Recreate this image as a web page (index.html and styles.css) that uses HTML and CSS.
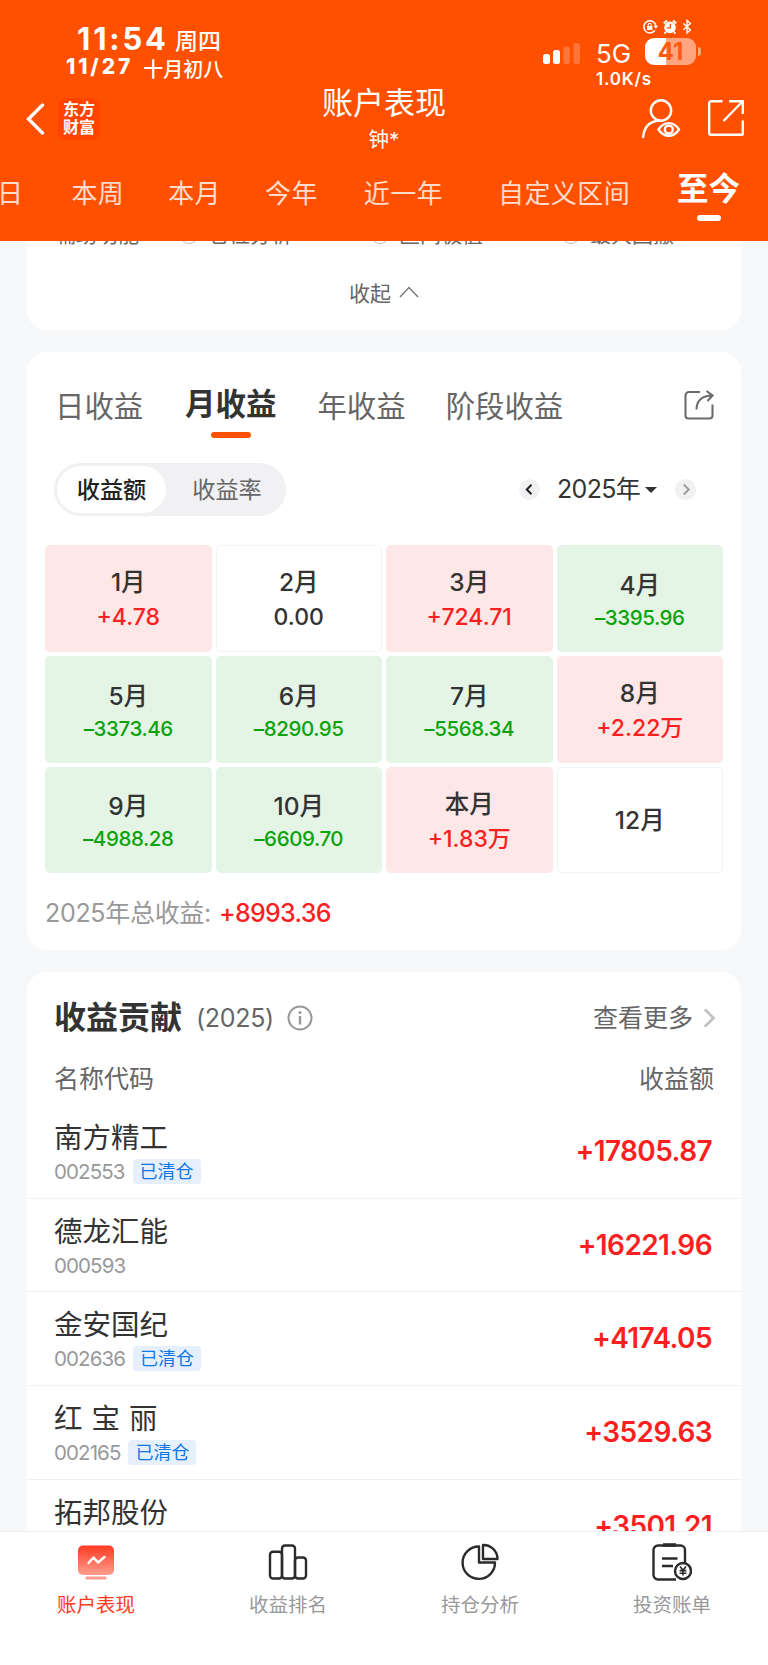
FILE: index.html
```
<!DOCTYPE html>
<html lang="zh-CN">
<head>
    <meta charset="UTF-8">
    <meta name="viewport" content="width=device-width, initial-scale=1.0">
    <title>账户表现</title>
    <link rel="stylesheet" href="styles.css">
</head>
<body>
    <header class="header">
        <div class="status">
            <div class="status-left">
                <div class="clock"><span class="time">11:54</span><span class="weekday">周四</span></div>
                <div class="date"><span class="day">11/27</span><span class="lunar">十月初八</span></div>
            </div>
            <div class="status-right">
                <div class="mini-icons">
                    <svg width="16" height="16" viewBox="0 0 16 16" fill="none" stroke="#fff" stroke-width="1.6">
                        <path d="M12.8 11.6A6.1 6.1 0 1 1 14 7.2"/>
                        <path d="M11.6 6.8h4.4l-2.2 3z" fill="#fff" stroke="none"/>
                        <rect x="5" y="7" width="5.4" height="4" fill="#fff" stroke="none"/>
                        <path d="M6.2 7V5.8a1.5 1.5 0 0 1 3 0V7" stroke-width="1.1"/>
                    </svg>
                    <svg width="14" height="16" viewBox="0 0 14 16">
                        <circle cx="7" cy="8.4" r="5.8" fill="#fff"/>
                        <path d="M.8 4.2L4 1.4M13.2 4.2L10 1.4M3 13l-1.4 1.6M11 13l1.4 1.6" stroke="#fff" stroke-width="2"/>
                        <path d="M7.4 4.8v4H4" fill="none" stroke="#ff5000" stroke-width="1.3"/>
                    </svg>
                    <svg width="10" height="16" viewBox="0 0 10 16" fill="none" stroke="#fff" stroke-width="1.4">
                        <path d="M1.4 4.6l7 6.4L5 14V1.4l3.4 3-7 6.4"/>
                    </svg>
                </div>
                <div class="network">
                    <svg class="signal" width="38" height="22" viewBox="0 0 38 22" fill="#fff">
                        <rect x="0" y="11" width="7" height="10" rx="2.5"/>
                        <rect x="10" y="7" width="7" height="14" rx="2.5"/>
                        <rect x="20.3" y="3.5" width="6.5" height="17.5" rx="2.5" opacity=".22"/>
                        <rect x="30.5" y="0" width="6.5" height="21" rx="2.5" opacity=".22"/>
                    </svg>
                    <span class="net-type">5G</span>
                    <span class="battery">41</span>
                    <span class="battery-cap"></span>
                </div>
                <div class="speed">1.0K/s</div>
            </div>
        </div>

        <div class="navbar">
            <div class="nav-left">
                <svg width="20" height="34" viewBox="0 0 20 34" fill="none" stroke="#fff" stroke-width="3.4">
                    <path d="M16.5 3L2.5 17l14 14" stroke-linecap="round"/>
                </svg>
                <div class="logo">东方<br>财富</div>
            </div>
            <div class="nav-title">
                <h1>账户表现</h1>
                <p>钟*</p>
            </div>
            <div class="nav-right">
                <svg width="40" height="40" viewBox="0 0 40 40" fill="none" stroke="#fff" stroke-width="2.4">
                    <circle cx="20" cy="11.5" r="10.2"/>
                    <path d="M2.2 38C3 28 9 22.5 18 21.5" stroke-linecap="round"/>
                    <path d="M17.5 30.5c5.5-8.5 15-8.5 20.5 0c-5.5 8.5-15 8.5-20.5 0z"/>
                    <circle cx="27.8" cy="30.5" r="4"/>
                </svg>
                <svg width="38" height="38" viewBox="0 0 38 38" fill="none" stroke="#fff" stroke-width="2.4">
                    <path d="M15.5 2.2H4A1.8 1.8 0 0 0 2.2 4v30A1.8 1.8 0 0 0 4 35.8h31.200a.6.6 0 0 0 .6-.6V21.5"/>
                    <path d="M22 2.2h13.800V15M35.500 2.500L16.500 22"/>
                </svg>
            </div>
        </div>

        <nav class="ranges">
            <span class="range range-day">日</span>
            <span class="range">本周</span>
            <span class="range">本月</span>
            <span class="range range-this-year">今年</span>
            <span class="range range-year">近一年</span>
            <span class="range range-custom">自定义区间</span>
            <span class="range active">至今</span>
        </nav>
    </header>

    <main class="content">
        <section class="card card-tools">
            <div class="tools">
                <span class="tools-label">辅助功能</span>
                <span class="tool"><i class="radio"></i>仓位分析</span>
                <span class="tool"><i class="radio"></i>区间极值</span>
                <span class="tool"><i class="radio"></i>最大回撤</span>
            </div>
            <div class="collapse">
                收起
                <svg width="20" height="12" viewBox="0 0 20 12" fill="none" stroke="#777" stroke-width="1.4">
                    <path d="M1 11l9-9.5L19 11"/>
                </svg>
            </div>
        </section>

        <section class="card card-profit">
            <div class="tabs">
                <span class="tab">日收益</span>
                <span class="tab active">月收益</span>
                <span class="tab tab-year">年收益</span>
                <span class="tab">阶段收益</span>
                <svg class="share" width="30" height="30" viewBox="0 0 30 30" fill="none" stroke="#6b6b6b" stroke-width="2.1">
                    <path d="M16 2H5a3.5 3.5 0 0 0-3.5 3.5v20A3 3 0 0 0 4.5 28.5h21a3 3 0 0 0 3-3v-11"/>
                    <path d="M12.5 19.5C12.5 11 18 5.5 28 5.5M22.5 1l6 4.5-5 5.500"/>
                </svg>
            </div>

            <div class="filter">
                <div class="switch">
                    <span class="switch-item on">收益额</span>
                    <span class="switch-item">收益率</span>
                </div>
                <div class="year">
                    <span class="arrow">
                        <svg width="21" height="21" viewBox="0 0 21 21" fill="none" stroke="#222" stroke-width="2"><path d="M12.5 5.8l-4.700 4.700 4.700 4.700"/></svg>
                    </span>
                    <span class="year-text">2025年</span>
                    <i class="caret"></i>
                    <span class="arrow">
                        <svg width="21" height="21" viewBox="0 0 21 21" fill="none" stroke="#999" stroke-width="1.8"><path d="M8.8 5.5l5 5-5 5"/></svg>
                    </span>
                </div>
            </div>

            <div class="months">
                <div class="month up"><b>1月</b><span>+4.78</span></div>
                <div class="month flat"><b>2月</b><span>0.00</span></div>
                <div class="month up"><b>3月</b><span>+724.71</span></div>
                <div class="month down"><b>4月</b><span>–3395.96</span></div>
                <div class="month down"><b>5月</b><span>–3373.46</span></div>
                <div class="month down"><b>6月</b><span>–8290.95</span></div>
                <div class="month down"><b>7月</b><span>–5568.34</span></div>
                <div class="month up"><b>8月</b><span>+2.22万</span></div>
                <div class="month down"><b>9月</b><span>–4988.28</span></div>
                <div class="month down"><b>10月</b><span>–6609.70</span></div>
                <div class="month up"><b>本月</b><span>+1.83万</span></div>
                <div class="month flat"><b>12月</b></div>
            </div>

            <div class="total"><span class="total-label">2025年总收益:</span><span class="total-value">+8993.36</span></div>
        </section>

        <section class="card card-list">
            <div class="list-title">
                <h2>收益贡献</h2>
                <span class="list-year">(2025)</span>
                <svg width="26" height="26" viewBox="0 0 26 26" fill="none" stroke="#999" stroke-width="2">
                    <circle cx="13" cy="13" r="11.5"/>
                    <path d="M13 11v8.5" stroke-width="2.4"/>
                    <circle cx="13" cy="7.6" r="1.5" fill="#999" stroke="none"/>
                </svg>
                <span class="more">查看更多</span>
                <svg width="13" height="20" viewBox="0 0 13 20" fill="none" stroke="#bfbfbf" stroke-width="2.6">
                    <path d="M1.8 1.3l8.700 8.700-8.700 8.700"/>
                </svg>
            </div>
            <div class="list-head"><span>名称代码</span><span>收益额</span></div>

            <div class="stock">
                <div>
                    <div class="name">南方精工</div>
                    <div class="code">002553<span class="tag">已清仓</span></div>
                </div>
                <div class="amount">+17805.87</div>
            </div>
            <div class="stock">
                <div>
                    <div class="name">德龙汇能</div>
                    <div class="code">000593</div>
                </div>
                <div class="amount">+16221.96</div>
            </div>
            <div class="stock">
                <div>
                    <div class="name">金安国纪</div>
                    <div class="code">002636<span class="tag">已清仓</span></div>
                </div>
                <div class="amount">+4174.05</div>
            </div>
            <div class="stock">
                <div>
                    <div class="name">红 宝 丽</div>
                    <div class="code">002165<span class="tag">已清仓</span></div>
                </div>
                <div class="amount">+3529.63</div>
            </div>
            <div class="stock">
                <div>
                    <div class="name">拓邦股份</div>
                </div>
                <div class="amount">+3501.21</div>
            </div>
        </section>
    </main>

    <footer class="tabbar">
        <div class="tabbar-item active">
            <svg width="40" height="40" viewBox="0 0 40 40">
                <defs>
                    <linearGradient id="screen" x1="0" y1="0" x2="0" y2="1">
                        <stop offset="0" stop-color="#ff3a20"/>
                        <stop offset="1" stop-color="#ff9d8e"/>
                    </linearGradient>
                </defs>
                <rect x="2" y="3.5" width="36" height="29.5" rx="5" fill="url(#screen)"/>
                <rect x="9.5" y="34.5" width="21" height="3" rx="1" fill="#ff9d8e"/>
                <path d="M12.5 21l5-5.5 4.5 5 6.5-5.5" fill="none" stroke="#fff" stroke-width="2.4" stroke-linecap="round" stroke-linejoin="round"/>
            </svg>
            <span>账户表现</span>
        </div>
        <div class="tabbar-item">
            <svg width="40" height="40" viewBox="0 0 40 40" fill="none" stroke="#2b2b2b" stroke-width="2.4">
                <rect x="2" y="9.8" width="12" height="26.7" rx="3"/>
                <rect x="14" y="3.5" width="13" height="33" rx="3"/>
                <rect x="27" y="15.5" width="11" height="21" rx="3"/>
            </svg>
            <span>收益排名</span>
        </div>
        <div class="tabbar-item">
            <svg width="40" height="40" viewBox="0 0 40 40" fill="none" stroke="#2b2b2b" stroke-width="2.4" stroke-linejoin="round">
                <path d="M19 4.5A16.2 16.2 0 1 0 35 20.5H19z"/>
                <path d="M23 3a14 14 0 0 1 14.5 14H23z"/>
            </svg>
            <span>持仓分析</span>
        </div>
        <div class="tabbar-item">
            <svg width="40" height="40" viewBox="0 0 40 40" fill="none" stroke="#2b2b2b" stroke-width="2.4">
                <path d="M24 37.5H6A4.5 4.5 0 0 1 1.5 33V8A4.5 4.5 0 0 1 6 3.5h22.500A4.5 4.5 0 0 1 33 8v13"/>
                <path d="M11 3h13" stroke-width="3.6"/>
                <path d="M10 16.5h15.5M10 24h11"/>
                <circle cx="31" cy="29" r="8"/>
                <path d="M28 24.5l3 3.8 3-3.8M31 28.3v5.2M27.6 28.6h6.800M27.6 31.3h6.800" stroke-width="1.6"/>
            </svg>
            <span>投资账单</span>
        </div>
    </footer>
</body>
</html>
```

FILE: styles.css
```
* {
    box-sizing: border-box;
}

body {
    font-family: Inter, "Noto Sans CJK SC", sans-serif;
    background-color: #f7f8fa;
    color: #333;
    margin: 0;
    height: 1665px;
    display: flex;
    flex-direction: column;
    overflow: hidden;
}

svg {
    display: block;
    flex-shrink: 0;
}

h1, h2, p {
    margin: 0;
}

/* header */
.header {
    height: 241px;
    flex-shrink: 0;
    background-color: #ff5000;
    color: #fff;
    position: relative;
    z-index: 1;
    overflow: hidden;
}

.status {
    height: 88px;
    display: flex;
    justify-content: space-between;
}

.status-left {
    padding: 21px 0 0 66px;
}

.clock {
    display: flex;
    align-items: center;
    height: 34px;
    padding-left: 11px;
}

.time {
    font-size: 31px;
    font-weight: 700;
    letter-spacing: 2.8px;
}

.weekday {
    font-size: 23px;
    font-weight: 500;
    margin: 1px 0 0 6px;
}

.date {
    display: flex;
    align-items: center;
    height: 22px;
}

.day {
    font-size: 21px;
    font-weight: 800;
    letter-spacing: 2.9px;
}

.lunar {
    font-size: 20px;
    font-weight: 500;
    margin: 4px 0 0 10px;
}

.status-right {
    width: 225px;
    padding-top: 19px;
}

.mini-icons {
    display: flex;
    gap: 5px;
    padding-left: 99px;
    height: 19px;
}

.network {
    display: flex;
    align-items: center;
    height: 27px;
}

.signal {
    margin-top: 5px;
}

.net-type {
    font-size: 26px;
    width: 49px;
    margin: 4px 0 0 15px;
}

.battery {
    width: 51px;
    height: 27px;
    border-radius: 9px;
    background: linear-gradient(to right, #fff 21px, #ffa680 21px);
    color: #ff5a10;
    font-size: 24px;
    font-weight: 700;
    line-height: 27px;
    text-align: center;
}

.battery-cap {
    width: 3px;
    height: 9px;
    margin-left: 2px;
    border-radius: 0 4px 4px 0;
    background-color: #ffa680;
}

.speed {
    font-size: 17px;
    font-weight: 600;
    letter-spacing: 0.8px;
    line-height: 28px;
    padding-left: 53px;
}

.navbar {
    display: grid;
    grid-template-columns: 1fr auto 1fr;
    height: 68px;
}

.nav-left {
    display: flex;
    align-items: center;
    padding: 0 0 8px 26px;
}

.logo {
    width: 42px;
    height: 42px;
    margin-left: 12px;
    padding-top: 2px;
    border-radius: 8px;
    background-color: #ff4300;
    font-size: 16px;
    font-weight: 700;
    line-height: 18px;
    text-align: center;
}

.nav-title {
    text-align: center;
    margin-top: -4px;
}

.nav-title h1 {
    font-size: 31px;
    font-weight: 400;
    line-height: 38px;
}

.nav-title p {
    font-size: 20.5px;
    line-height: 36px;
}

.nav-right {
    display: flex;
    justify-content: flex-end;
    gap: 26px;
    padding: 11px 23px 0 0;
}

.ranges {
    display: flex;
    height: 75px;
    line-height: 75px;
    font-size: 26px;
    letter-spacing: 0.4px;
    white-space: nowrap;
}

.range {
    margin-right: 44px;
    opacity: 0.8;
}

.range-day {
    margin: 0 48px 0 -3px;
}

.range-this-year {
    margin-right: 46px;
}

.range-year {
    margin-right: 55px;
}

.range-custom {
    margin-right: 47px;
}

.range.active {
    position: relative;
    margin: 0;
    font-size: 31.5px;
    font-weight: 700;
    letter-spacing: 0;
    line-height: 65px;
    opacity: 1;
}

.range.active::after,
.tab.active::after {
    content: "";
    position: absolute;
    left: 50%;
    transform: translateX(-50%);
    height: 6px;
    border-radius: 3px;
}

.range.active::after {
    width: 24px;
    top: 59px;
    background-color: #fff;
}

/* cards */
.content {
    flex: 1;
    min-height: 0;
    padding: 0 27px;
    overflow: hidden;
}

.card {
    background-color: #fff;
    border-radius: 20px;
    margin-bottom: 22px;
}

.card-tools {
    display: flex;
    flex-direction: column;
    height: 89px;
    border-radius: 0 0 20px 20px;
}

.tools {
    display: flex;
    height: 20px;
    line-height: 20px;
    padding-left: 28px;
    font-size: 21px;
    color: #666;
    margin-top: -16px;
}

.tools-label {
    width: 125px;
    flex-shrink: 0;
}

.tool {
    display: flex;
    align-items: center;
    width: 191px;
    flex-shrink: 0;
    white-space: nowrap;
}

.radio {
    width: 18px;
    height: 18px;
    margin-right: 10px;
    border: 1.5px solid #bbb;
    border-radius: 50%;
}

.collapse {
    display: flex;
    align-items: center;
    justify-content: center;
    gap: 8px;
    height: 64px;
    margin-top: 15px;
    font-size: 21px;
    color: #666;
}

.card-profit {
    height: 598px;
    padding: 0 18px;
}

.tabs {
    display: flex;
    align-items: center;
    height: 104px;
    padding: 0 9px 0 10px;
    font-size: 29.4px;
    color: #666;
}

.tab {
    margin-right: 41.8px;
}

.tab.active {
    position: relative;
    font-size: 30.5px;
    font-weight: 700;
    color: #333;
    line-height: 66px;
    margin-right: 41px;
}

.tab.active::after {
    width: 40px;
    bottom: -1px;
    background-color: #ff5000;
}

.tab-year {
    margin-right: 40px;
}

.share {
    margin: 2px 0 0 auto;
}

.filter {
    display: flex;
    align-items: center;
    justify-content: space-between;
    height: 65px;
    padding: 1px 27px 0 9px;
}

.switch {
    display: flex;
    width: 232px;
    height: 53px;
    padding: 3px;
    border-radius: 27px;
    background-color: #f1f1f4;
    font-size: 23.2px;
    line-height: 48px;
    text-align: center;
    color: #666;
}

.switch-item {
    width: 122px;
    flex-shrink: 0;
}

.switch-item.on {
    width: 109px;
    border-radius: 24px;
    background-color: #fff;
    font-weight: 500;
    color: #222;
}

.year {
    display: flex;
    align-items: center;
}

.year-text {
    font-size: 25px;
    letter-spacing: -0.7px;
    line-height: 28px;
    margin: -1px 0 0 17px;
}

.arrow {
    border-radius: 50%;
    background-color: #f1f1f4;
}

.caret {
    border: 6px solid transparent;
    border-top-color: #333;
    border-bottom: 0;
    margin: 1px 18px 0 5px;
}

.months {
    display: grid;
    grid-template-columns: repeat(4, 1fr);
    grid-auto-rows: 106.8px;
    gap: 4px;
    margin-top: 24px;
}

.month {
    display: flex;
    flex-direction: column;
    align-items: center;
    justify-content: center;
    border-radius: 5px;
    font-weight: 500;
}

.month b {
    font-size: 24.5px;
    font-weight: 500;
    line-height: 38px;
}

.month span {
    font-size: 23px;
    line-height: 32px;
}

.month.up {
    background-color: #fde7e7;
}

.month.up span {
    color: #fb1f1f;
}

.month.flat {
    border: 1px solid #f3f3f5;
}

.month.down {
    background-color: #e4f4e5;
}

.month.down span {
    font-size: 20.5px;
    letter-spacing: -0.4px;
    line-height: 27px;
    color: #0aa30a;
}

.total {
    display: flex;
    align-items: center;
    height: 80px;
    font-size: 25px;
    line-height: 30px;
}

.total-label {
    color: #999;
    width: 174px;
    letter-spacing: -0.3px;
    white-space: nowrap;
}

.total-value {
    font-weight: 500;
    letter-spacing: -0.7px;
    color: #fb1f1f;
}

/* contribution list */
.card-list {
    margin-bottom: 0;
}

.list-title {
    display: flex;
    align-items: center;
    height: 92px;
    padding: 0 25px 0 27px;
    color: #666;
    font-size: 25px;
    line-height: 36px;
}

.list-title h2 {
    font-size: 32px;
    font-weight: 700;
    color: #333;
}

.list-year {
    letter-spacing: -0.3px;
    margin: 0 13px 0 14px;
}

.more {
    margin: 0 10px 0 auto;
}

.list-head {
    display: flex;
    justify-content: space-between;
    padding: 1px 27px 12px;
    font-size: 25px;
    line-height: 28px;
    color: #666;
}

.stock {
    display: flex;
    justify-content: space-between;
    height: 93.7px;
    padding: 13px 28px 0 27px;
    border-bottom: 1.5px solid #f1f1f3;
}

.name {
    font-size: 28.5px;
    line-height: 40px;
    word-spacing: 1px;
}

.code {
    display: flex;
    align-items: center;
    height: 27px;
    font-size: 20.5px;
    letter-spacing: -0.9px;
    color: #999;
}

.tag {
    height: 25px;
    margin-left: 8px;
    padding: 0 7px;
    border-radius: 4px;
    background-color: #e6f0fc;
    color: #0f76e6;
    font-size: 18px;
    letter-spacing: 0;
    line-height: 25px;
}

.amount {
    font-size: 28px;
    font-weight: 600;
    letter-spacing: -0.6px;
    line-height: 66px;
    margin-right: 1px;
    color: #fb1f1f;
}

/* bottom bar */
.tabbar {
    display: flex;
    height: 134px;
    flex-shrink: 0;
    border-top: 1px solid #ececee;
    background-color: #fff;
}

.tabbar-item {
    flex: 1;
    display: flex;
    flex-direction: column;
    align-items: center;
    padding-top: 10px;
    font-size: 19.5px;
    color: #999;
}

.tabbar-item span {
    line-height: 44px;
    margin-top: 1px;
}

.tabbar-item.active {
    color: #ff3a20;
}
```
